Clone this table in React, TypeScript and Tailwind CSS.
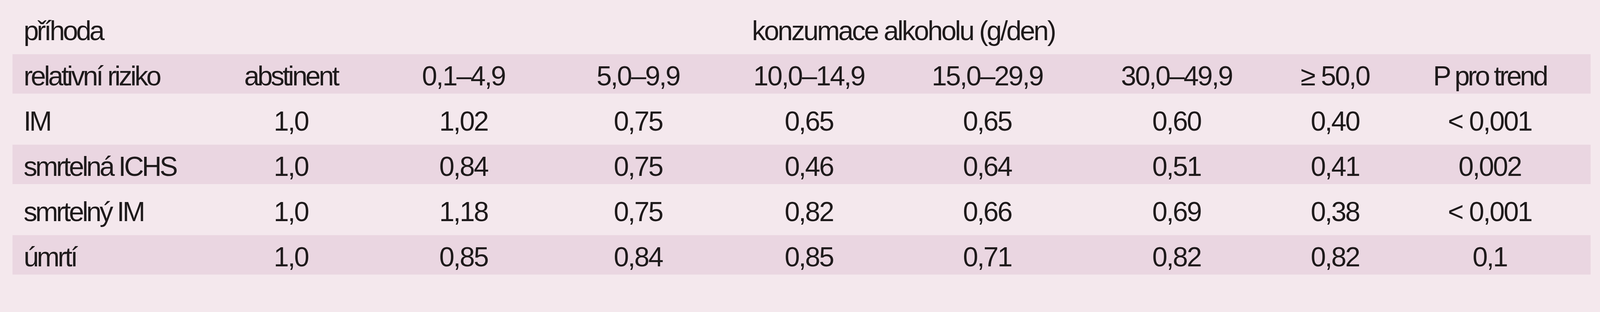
import React from 'react';

// Column grid: label column + 8 value columns (proportional to the frame width)
const grid = "grid grid-cols-[595fr_438fr_570fr_450fr_548fr_494fr_612fr_314fr_590fr]";

const headers = ["abstinent", "0,1–4,9", "5,0–9,9", "10,0–14,9", "15,0–29,9", "30,0–49,9", "≥ 50,0", "P pro trend"];

interface Row {
  label: string;
  values: string[];
}

const rows: Row[] = [
  { label: "IM", values: ["1,0", "1,02", "0,75", "0,65", "0,65", "0,60", "0,40", "< 0,001"] },
  { label: "smrtelná ICHS", values: ["1,0", "0,84", "0,75", "0,46", "0,64", "0,51", "0,41", "0,002"] },
  { label: "smrtelný IM", values: ["1,0", "1,18", "0,75", "0,82", "0,66", "0,69", "0,38", "< 0,001"] },
  { label: "úmrtí", values: ["1,0", "0,85", "0,84", "0,85", "0,71", "0,82", "0,82", "0,1"] },
];

const isWord = (s: string) => /[a-zá-ž]/i.test(s);

const App: React.FC = () => {
  return (
    <div className="w-full h-[800px] overflow-hidden bg-[#f4e8ed] text-[#1e1a1b] font-['Liberation_Sans',Arial,sans-serif] text-[70px] pt-[23px] pl-[0.77vw] pr-[0.578vw]">
      <div className="flex flex-col gap-y-[15px]">
        {/* title row */}
        <div className={`${grid} h-[101px]`}>
          <div className="flex items-center pl-[0.706vw] pt-[4px] tracking-[-5px]">příhoda</div>
          <div className="col-span-8 flex items-center justify-center pt-[4px] tracking-[-4px]">
            konzumace alkoholu (g/den)
          </div>
        </div>

        {/* column headers */}
        <div className={`${grid} h-[101px] bg-[#ead6e1]`}>
          <div className="flex items-center pl-[0.706vw] pt-[4px] tracking-[-5px] whitespace-nowrap">relativní riziko</div>
          {headers.map((h, i) => (
            <div
              key={i}
              className={`flex items-center justify-center pt-[4px] whitespace-nowrap ${isWord(h) ? 'tracking-[-5px]' : 'tracking-[-3px]'}`}
            >
              {h}
            </div>
          ))}
        </div>

        {rows.map((row, r) => (
          <div key={r} className={`${grid} h-[101px] ${r % 2 === 1 ? 'bg-[#ead6e1]' : ''}`}>
            <div className="flex items-center pl-[0.706vw] pt-[4px] tracking-[-5px] whitespace-nowrap">{row.label}</div>
            {row.values.map((v, i) => (
              <div key={i} className="flex items-center justify-center pt-[4px] tracking-[-3px] whitespace-nowrap">
                {v}
              </div>
            ))}
          </div>
        ))}
      </div>
    </div>
  );
};

export default App;
